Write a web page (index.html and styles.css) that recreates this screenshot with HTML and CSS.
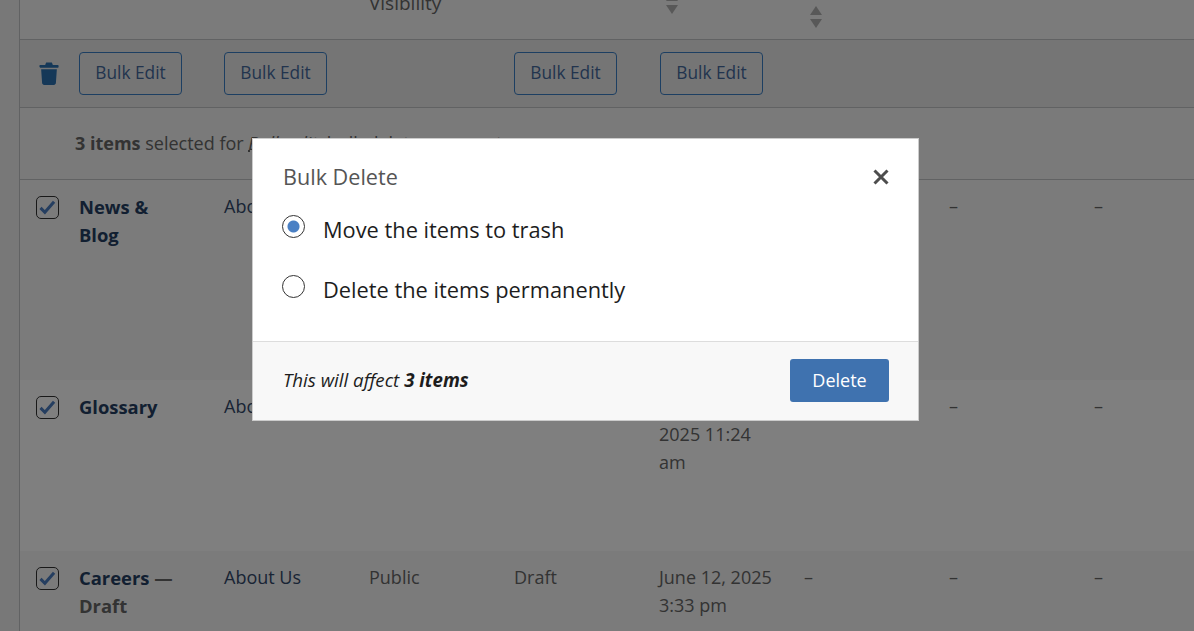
FILE: index.html
```html
<!doctype html>
<html>
	<head>
		<meta charset="utf-8" />
		<title>Bulk Delete</title>
		<link rel="stylesheet" href="styles.css">
	</head>
	<body>
		<div class="list">
			<div class="row head">
				<div></div>
				<div></div>
				<div></div>
				<div class="head_label">Visibility</div>
				<div></div>
				<div><span class="sort sort_low"><i class="up"></i><i class="down"></i></span></div>
				<div><span class="sort"><i class="up"></i><i class="down"></i></span></div>
			</div>
			<div class="row bulk">
				<div class="trash_cell">
					<svg class="trash" viewBox="0 0 20 24"><path d="M7 0.5h6l1 2.5h5.2c.5 0 .8.4.8.8v1.4c0 .4-.3.8-.8.8H.8C.3 5.500 0 5.100 0 4.700V3.800C0 3.400.3 3 .8 3H6zM1.800 7.500h16.400l-1 14.500c-.1 1.100-1 2-2.100 2H4.900c-1.100 0-2-.9-2.100-2z"/></svg>
				</div>
				<div><button class="bulk_edit">Bulk Edit</button></div>
				<div><button class="bulk_edit">Bulk Edit</button></div>
				<div></div>
				<div><button class="bulk_edit">Bulk Edit</button></div>
				<div><button class="bulk_edit bulk_edit_last">Bulk Edit</button></div>
			</div>
			<div class="note"><b>3 items</b> selected for <u>Bulk edit</u>, bulk delete or export</div>
			<div class="row item item_tall">
				<div><span class="check"><svg viewBox="0 0 24 24"><path d="M4 12.500l5 5 10.500-12"/></svg></span></div>
				<div class="name">News &amp; Blog</div>
				<div class="parent">About Us</div>
				<div>Public</div>
				<div>Published</div>
				<div>December 12, 2025 11:24 am</div>
				<div>–</div>
				<div>–</div>
				<div>–</div>
			</div>
			<div class="row item item_mid item_light">
				<div><span class="check"><svg viewBox="0 0 24 24"><path d="M4 12.500l5 5 10.500-12"/></svg></span></div>
				<div class="name">Glossary</div>
				<div class="parent">About Us</div>
				<div>Public</div>
				<div>Published</div>
				<div>December 12, 2025 11:24 am</div>
				<div>–</div>
				<div>–</div>
				<div>–</div>
			</div>
			<div class="row item item_tall">
				<div><span class="check"><svg viewBox="0 0 24 24"><path d="M4 12.500l5 5 10.500-12"/></svg></span></div>
				<div class="name">Careers <span class="state">— Draft</span></div>
				<div class="parent">About Us</div>
				<div>Public</div>
				<div>Draft</div>
				<div>June 12, 2025 3:33 pm</div>
				<div>–</div>
				<div>–</div>
				<div>–</div>
			</div>
		</div>
		<div class="overlay">
			<div class="modal">
				<div class="modal_head">
					<span class="modal_title">Bulk Delete</span>
					<svg class="close" viewBox="0 0 16 16"><path d="M1.500 1.500l13 13M14.500 1.500l-13 13"/></svg>
				</div>
				<div class="modal_body">
					<label class="choice"><span class="radio radio_on"></span>Move the items to trash</label>
					<label class="choice"><span class="radio"></span>Delete the items permanently</label>
				</div>
				<div class="modal_foot">
					<em>This will affect <b>3 items</b></em>
					<button class="delete">Delete</button>
				</div>
			</div>
		</div>
	</body>
</html>
```
FILE: styles.css
```css
html, body {
	height : 100%;
}
body {
	margin : 0;
	overflow : hidden;
	background-color : #f0f0f1;
	font-family : "Open Sans", "Noto Sans", sans-serif;
	font-size : 18px;
	line-height : 28px;
	color : #666;
}
.list {
	margin-left : 19px;
	margin-top : -30px;
	border-left : 1px solid #c3c4c7;
	background-color : #fff;
}
.row {
	display : grid;
	grid-template-columns : 59px repeat(7, 145px) 1fr;
}
.row > div {
	padding-right : 28px;
}
.head {
	height : 70px;
	box-sizing : border-box;
	padding-top : 19px;
	border-bottom : 1px solid #c3c4c7;
	background-color : #f6f6f6;
}
.row > .head_label {
	padding-right : 0;
	font-size : 19px;
}
.sort {
	display : flex;
	flex-direction : column;
	gap : 4px;
	width : 12px;
	margin-left : 6px;
	margin-top : 17px;
}
.sort_low {
	margin-left : 7px;
	margin-top : 3px;
}
.up {
	border : 6px solid transparent;
	border-top : 0;
	border-bottom : 9px solid #b0b0b0;
}
.down {
	border : 6px solid transparent;
	border-bottom : 0;
	border-top : 9px solid #b0b0b0;
}
.bulk {
	height : 68px;
	box-sizing : border-box;
	align-items : center;
	background-color : #ebebeb;
	border-bottom : 1px solid #c3c4c7;
}
.trash_cell {
	padding-left : 19px;
}
.trash {
	display : block;
	width : 20px;
	height : 23px;
	fill : #2a70b0;
}
.bulk_edit {
	width : 103px;
	height : 43px;
	padding : 0 0 1px;
	border : 1px solid #3a7ec4;
	border-radius : 4px;
	background : transparent;
	color : #44699c;
	font : inherit;
	font-size : 17.300px;
}
.bulk_edit_last {
	margin-left : 1px;
}
.note {
	height : 72px;
	box-sizing : border-box;
	padding : 21px 0 0 55px;
	background-color : #f4f4f4;
	border-bottom : 1px solid #c3c4c7;
}
.note u {
	font-style : italic;
	text-decoration-style : dotted;
}
.item {
	padding-top : 12px;
	background-color : #f6f6f6;
}
.item_tall {
	height : 188px;
}
.item_mid {
	height : 159px;
}
.item_light {
	background-color : #fff;
}
.check {
	display : block;
	box-sizing : border-box;
	width : 23px;
	height : 23px;
	margin : 4px 0 0 16px;
	border : 1px solid #333;
	border-radius : 5px;
}
.check svg {
	display : block;
	width : 21px;
	height : 21px;
	fill : none;
	stroke : #4a7cc0;
	stroke-width : 3.500;
}
.row > .name {
	padding-right : 40px;
	margin-top : 1px;
	font-size : 18.400px;
	font-weight : 700;
	color : #243f63;
}
.state {
	color : #666;
}
.parent {
	color : #33486a;
}
.overlay {
	position : fixed;
	inset : 0;
	display : flex;
	justify-content : center;
	align-items : flex-start;
	padding : 138px 23px 0 0;
	background-color : rgba(0, 0, 0, 0.5);
}
.modal {
	width : 667px;
	box-sizing : border-box;
	border : 1px solid #ccc;
	background-color : #fff;
	color : #1d1d1d;
}
.modal_head {
	display : flex;
	justify-content : space-between;
	align-items : center;
	padding : 24px 29px 0 30px;
}
.modal_title {
	font-size : 21.600px;
	color : #555;
}
.close {
	width : 16px;
	height : 16px;
	fill : none;
	stroke : #4d4d4d;
	stroke-width : 3;
}
.modal_body {
	display : flex;
	flex-direction : column;
	gap : 30px;
	padding : 24px 29px 36px;
}
.choice {
	display : flex;
	gap : 18px;
	font-size : 21.800px;
	line-height : 30px;
}
.radio {
	width : 23px;
	height : 23px;
	box-sizing : border-box;
	border : 1px solid #333;
	border-radius : 50%;
}
.radio_on {
	background : radial-gradient(circle, #4a80c4 0 5.500px, #fff 6.500px);
}
.modal_foot {
	display : flex;
	justify-content : space-between;
	align-items : center;
	height : 79px;
	box-sizing : border-box;
	padding : 0 29px 2px 30px;
	border-top : 1px solid #ddd;
	background-color : #f8f8f8;
	font-size : 18.700px;
}
.delete {
	width : 99px;
	height : 43px;
	padding : 0;
	border : 0;
	border-radius : 3px;
	background-color : #3f72af;
	color : #fff;
	font : inherit;
	font-size : 18px;
}
```
